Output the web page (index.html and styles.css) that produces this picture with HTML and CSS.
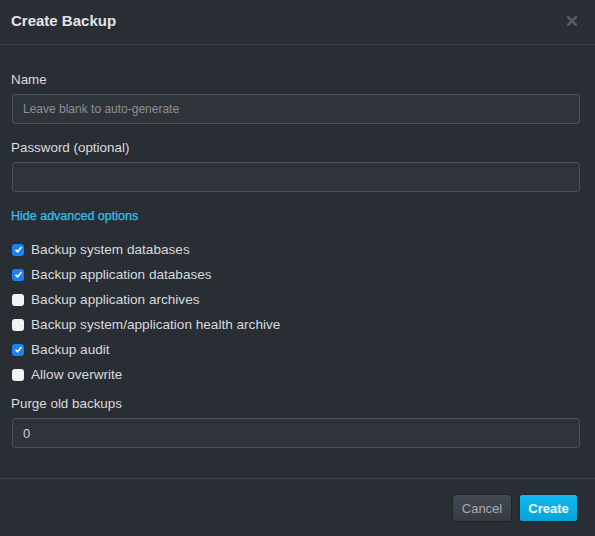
FILE: index.html
```html
<!DOCTYPE html>
<html>
<head>
<meta charset="utf-8">
<link rel="stylesheet" href="styles.css">
</head>
<body>
<div class="modal">
  <div class="header">
    <div class="title">Create Backup</div>
    <svg class="close" width="10" height="10" viewBox="0 0 10 10"><path d="M1 1L9 9M9 1L1 9" stroke="#565b63" stroke-width="2.6" stroke-linecap="square"/></svg>
  </div>
  <div class="body">
    <div class="label">Name</div>
    <div class="input placeholder">Leave blank to auto-generate</div>
    <div class="label mt">Password (optional)</div>
    <div class="input"></div>
    <div class="link">Hide advanced options</div>
    <div class="checks">
      <div class="row"><span class="cb on"><svg width="9" height="9" viewBox="0 0 9 9"><path d="M1.5 4.8L3.6 6.8L7.5 2" fill="none" stroke="#fff" stroke-width="1.6"/></svg></span>Backup system databases</div>
      <div class="row"><span class="cb on"><svg width="9" height="9" viewBox="0 0 9 9"><path d="M1.5 4.8L3.6 6.8L7.5 2" fill="none" stroke="#fff" stroke-width="1.6"/></svg></span>Backup application databases</div>
      <div class="row"><span class="cb"></span>Backup application archives</div>
      <div class="row"><span class="cb"></span>Backup system/application health archive</div>
      <div class="row"><span class="cb on"><svg width="9" height="9" viewBox="0 0 9 9"><path d="M1.5 4.8L3.6 6.8L7.5 2" fill="none" stroke="#fff" stroke-width="1.6"/></svg></span>Backup audit</div>
      <div class="row"><span class="cb"></span>Allow overwrite</div>
    </div>
    <div class="label mt2">Purge old backups</div>
    <div class="input value">0</div>
  </div>
  <div class="footer">
    <div class="btn cancel">Cancel</div>
    <div class="btn create">Create</div>
  </div>
</div>
</body>
</html>
```
FILE: styles.css
```css
html, body {
  margin: 0;
  padding: 0;
  background: #292d34;
}
body {
  font-family: "Liberation Sans", Arial, sans-serif;
  font-size: 13px;
  color: #d6d9dc;
}
.modal {
  width: 595px;
  height: 536px;
  display: flex;
  flex-direction: column;
}
.header {
  height: 45px;
  border-bottom: 1px solid #3b4047;
  display: flex;
  align-items: center;
  justify-content: space-between;
  padding: 0 18px 0 11px;
  box-sizing: border-box;
  flex: none;
}
.title {
  font-weight: bold;
  font-size: 15px;
  color: #e2e4e7;
  margin-top: -4px;
}
.close {
  margin-top: -2px;
}
.body {
  padding: 26px 15px 30px 12px;
  display: flex;
  flex-direction: column;
  flex: none;
}
.label {
  line-height: 18px;
  margin-bottom: 5px;
  margin-left: -1px;
  font-size: 13.4px;
  color: #dadcdf;
}
.mt { margin-top: 15px; }
.mt2 { margin-top: 8px; }
.input {
  height: 30px;
  box-sizing: border-box;
  border: 1px solid #4b5159;
  border-radius: 3px;
  background: #2e343a;
  padding: 0 10px;
  display: flex;
  align-items: center;
  font-size: 12px;
}
.placeholder { color: #8c9197; }
.value { color: #d2d5d8; font-size: 13px; }
.link {
  margin-top: 15px;
  line-height: 18px;
  font-size: 12.5px;
  color: #2ec3ea;
  margin-left: -1px;
  -webkit-text-stroke: 0.25px #2ec3ea;
}
.checks {
  margin-top: 12px;
  display: flex;
  flex-direction: column;
}
.row {
  height: 25px;
  display: flex;
  align-items: center;
  font-size: 13.6px;
  color: #d8dadd;
}
.cb {
  width: 12px;
  height: 12px;
  border-radius: 3px;
  background: #f4f4f4;
  margin-right: 7px;
  display: flex;
  align-items: center;
  justify-content: center;
  flex: none;
}
.cb.on {
  background: #1b82f6;
}
.footer {
  border-top: 1px solid #3b4047;
  flex: 1;
  display: flex;
  justify-content: flex-end;
  align-items: flex-start;
  padding: 15px 17px 0 0;
  gap: 7px;
}
.btn {
  height: 28px;
  box-sizing: border-box;
  border-radius: 3px;
  display: flex;
  align-items: center;
  justify-content: center;
  font-size: 13px;
}
.cancel {
  width: 60px;
  background: linear-gradient(#434951, #363b42);
  border: 1px solid #1f2227;
  color: #a8acb1;
}
.create {
  width: 59px;
  background: linear-gradient(#12b9ef, #07a2d8);
  border: 1px solid #1a2a33;
  color: #ffffff;
  font-weight: bold;
}
```
